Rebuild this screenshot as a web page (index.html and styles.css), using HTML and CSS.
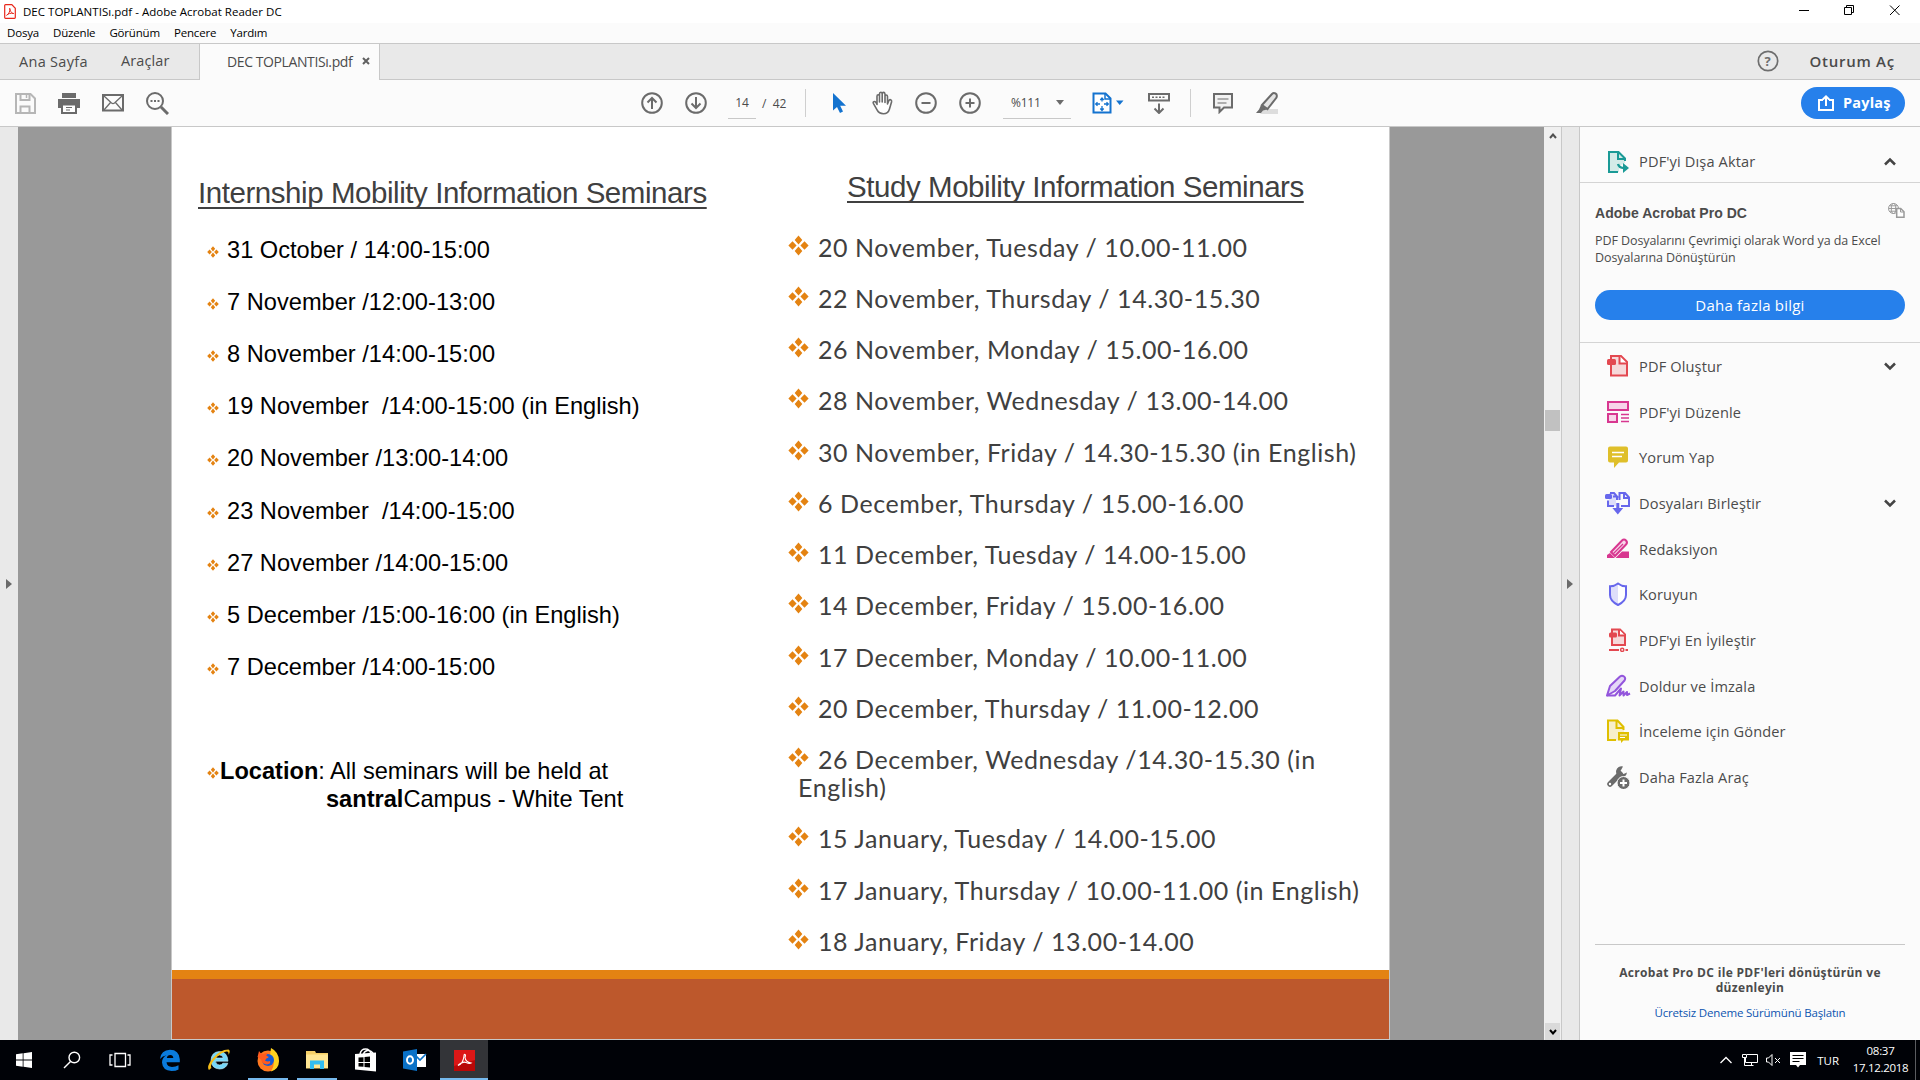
FILE: index.html
```html
<!DOCTYPE html>
<html lang="tr">
<head>
<meta charset="utf-8">
<title>DEC TOPLANTISı.pdf - Adobe Acrobat Reader DC</title>
<link rel="stylesheet" href="styles.css">
</head>
<body>
<svg class="defs" width="0" height="0">
  <symbol id="diamonds" viewBox="0 0 22 22"><path d="M11 .5l4 4.7-4 4.7-4-4.7zM11 12.100l4 4.700-4 4.700-4-4.700zM4.700 6.500l4.300 4.500-4.300 4.500L.4 11zM17.300 6.500l4.300 4.500-4.300 4.500L13 11z" fill="currentColor"/></symbol>
  <symbol id="chev" viewBox="0 0 14 10"><path d="M2 2.500l5 5 5-5" fill="none" stroke="#444" stroke-width="2.500"/></symbol>
</svg>
<div class="window">
  <header class="titlebar">
    <svg class="app-icon" width="12" height="15" viewBox="0 0 12 15"><path d="M1.500.7h6.300l3.500 3.600v9.200a.8.800 0 0 1-.8.800h-9a.8.800 0 0 1-.8-.8v-12a.8.800 0 0 1 .8-.8z" fill="#fff" stroke="#e8271b" stroke-width="1.200"/><path d="M2.600 11.300C5 10 6.500 6.500 5.700 4.300c1 4 2 5 4 5.200C7 8.700 4 9.700 2.600 11.300z" fill="none" stroke="#e8271b"/></svg>
    <span class="title">DEC TOPLANTISı.pdf - Adobe Acrobat Reader DC</span>
    <svg class="win-controls" width="104" height="12" viewBox="0 0 104 12" fill="none" stroke="#000"><path d="M0 6.500h10M45.500 3.500h7v7h-7zM47.500 3v-1.500h7v7H53M91 1.500l9.500 9.500M100.500 1.500L91 11"/></svg>
  </header>
  <nav class="menubar"><span>Dosya</span><span>Düzenle</span><span>Görünüm</span><span>Pencere</span><span>Yardım</span></nav>
  <div class="tabbar">
    <span class="tab home">Ana Sayfa</span><span class="tab tools-tab">Araçlar</span>
    <div class="tab active"><span>DEC TOPLANTISı.pdf</span><svg width="8" height="8" viewBox="0 0 8 8"><path d="M1 1l6 6M7 1L1 7" stroke="#606060" stroke-width="2"/></svg></div>
    <div class="account">
      <svg width="22" height="22" viewBox="0 0 22 22"><circle cx="11" cy="11" r="9.700" fill="none" stroke="#6e6e6e" stroke-width="1.700"/><text x="11" y="16" text-anchor="middle" class="qmark">?</text></svg>
      <span>Oturum Aç</span>
    </div>
  </div>
  <div class="toolbar">
    <div class="group files">
      <svg width="24" height="24" viewBox="0 0 24 24" fill="none" stroke="#b6b6b6" stroke-width="2"><path d="M3 3h14.500L22 7.500V22H3z"/><path d="M7.500 3v6h9V3M7.500 22v-6.500h9V22"/><path d="M13.500 4v3" stroke-width="1.500"/></svg>
      <svg width="24" height="24" viewBox="0 0 24 24"><path d="M5 2h14v5H5zM1 8h22v9h-3v-3H4v3H1z" fill="#6b6b6b"/><path d="M5 13.500h14V22H5z" fill="#fff" stroke="#6b6b6b" stroke-width="2"/><path d="M9 16.500h6M9 19h4" stroke="#6b6b6b" stroke-width="1.200"/></svg>
      <svg width="24" height="24" viewBox="0 0 24 24" fill="none" stroke="#6b6b6b"><path d="M2 4h20v15.500H2z" stroke-width="2"/><path d="M3 5l7.500 7q1.500 1.200 3 0L21 5M3 19l6.500-7.500M21 19l-6.500-7.500" stroke-width="1.300"/></svg>
      <svg width="24" height="24" viewBox="0 0 24 24" fill="none" stroke="#6b6b6b"><circle cx="10" cy="10" r="8" stroke-width="2"/><path d="M16 16l7 7" stroke-width="3"/><path d="M5.500 10h9" stroke-width="2" stroke-dasharray="2 1.500"/></svg>
    </div>
    <div class="group pages">
      <svg width="22" height="22" viewBox="0 0 22 22" class="line"><circle cx="11" cy="11" r="9.800"/><path d="M11 17V6M6.500 10.500L11 6l4.500 4.500"/></svg>
      <svg width="22" height="22" viewBox="0 0 22 22" class="line"><circle cx="11" cy="11" r="9.800"/><path d="M11 5v11M6.500 11.500L11 16l4.500-4.500"/></svg>
      <span class="page-no">14</span><span class="page-total">/&nbsp; 42</span>
    </div>
    <i class="sep"></i>
    <div class="group view">
      <svg width="14" height="22" viewBox="0 0 14 22"><path d="M1 1v17.500l4-3.500 3 6 3-1.500-2.800-5.700H14z" fill="#1473cf"/></svg>
      <svg class="hand" width="24" height="24" viewBox="0 0 24 24" fill="#fff" stroke="#6b6b6b" stroke-width="1.600" stroke-linejoin="round" stroke-linecap="round"><path d="M7 13.500V5.200q0-1.500 1.200-1.500t1.300 1.500V11 3q0-1.700 1.300-1.700T12.200 3v8V3q0-1.600 1.300-1.600T15 3v8.500-6q0-1.500 1.200-1.500t1.300 1.500V13l1.300-3.300q.6-1.400 1.800-1t1 2l-2.200 7.500q-1.300 4.500-6 4.500-4.500 0-6.200-3.500l-3.700-6.500q-.8-1.500.3-2t2.200.8z"/></svg>
      <svg width="22" height="22" viewBox="0 0 22 22" class="line"><circle cx="11" cy="11" r="9.800"/><path d="M6.500 11h9"/></svg>
      <svg width="22" height="22" viewBox="0 0 22 22" class="line"><circle cx="11" cy="11" r="9.800"/><path d="M6.500 11h9M11 6.500v9"/></svg>
      <div class="zoom-box"><span>%111</span><svg width="8" height="5" viewBox="0 0 8 5"><path d="M0 0h8L4 5z" fill="#6b6b6b"/></svg></div>
      <svg width="32" height="22" viewBox="0 0 32 22"><path d="M1.500 1.500h12l5 5v14h-17z" fill="#fff" stroke="#1473cf" stroke-width="2"/><path d="M13 2v5h5" fill="none" stroke="#1473cf" stroke-width="1.500"/><path d="M10 6.500v3M10 14v4M4 12h4M12 12h4M8.300 8L10 6l1.700 2M8.300 16.500l1.700 2 1.700-2M5.500 10.300L3.700 12l1.800 1.700M14.500 10.300l1.800 1.700-1.800 1.700" fill="none" stroke="#1473cf" stroke-width="1.300"/><path d="M24 8.500h7.500L27.700 13z" fill="#1473cf"/></svg>
      <svg class="ruler" width="22" height="22" viewBox="0 0 22 22" fill="none" stroke="#6b6b6b"><path d="M1 2h20v6.500H1z" stroke-width="2"/><path d="M4 5.200h14" stroke-width="1.500" stroke-dasharray="2 1.500"/><path d="M11 11.500v9M6.500 16.500L11 21l4.500-4.500" stroke-width="2"/></svg>
    </div>
    <i class="sep"></i>
    <div class="group notes">
      <svg width="22" height="22" viewBox="0 0 22 22" fill="#f2f2f2" stroke="#6b6b6b"><path d="M2 2h18v13.500h-8L7.500 20v-4.500H2z" stroke-width="2"/><path d="M5.500 7h11M5.500 11h9" stroke-width="1.200"/></svg>
      <svg width="24" height="22" viewBox="0 0 24 22"><path d="M9 17h14v5H5z" fill="#ddd"/><path d="M7 13L17 2q1.500-1.500 3.500-.5t1 4L12.500 17z" fill="#e4e4e4" stroke="#6b6b6b" stroke-width="2"/><path d="M6 13l6 4.500-4 1-2 2.500H1l3-3.500z" fill="#6b6b6b"/></svg>
    </div>
    <div class="share"><svg width="16" height="16" viewBox="0 0 16 16" fill="none" stroke="#fff" stroke-width="2"><path d="M5 5H1v10h14V5h-4M8 11V2M4.800 4.500L8 1.400l3.200 3.100"/></svg><span>Paylaş</span></div>
  </div>
  <main class="workspace">
    <div class="strip left"><svg width="6" height="10"><path d="M0 0l6 5-6 5z" fill="#6a6a6a"/></svg></div>
    <div class="canvas">
      <article class="slide">
        <div class="columns">
          <section class="internship">
            <h1>Internship Mobility Information Seminars</h1>
            <ul>
              <li><svg><use href="#diamonds"/></svg>31 October / 14:00-15:00</li>
              <li><svg><use href="#diamonds"/></svg>7 November /12:00-13:00</li>
              <li><svg><use href="#diamonds"/></svg>8 November /14:00-15:00</li>
              <li><svg><use href="#diamonds"/></svg>19 November &nbsp;/14:00-15:00 (in English)</li>
              <li><svg><use href="#diamonds"/></svg>20 November /13:00-14:00</li>
              <li><svg><use href="#diamonds"/></svg>23 November &nbsp;/14:00-15:00</li>
              <li><svg><use href="#diamonds"/></svg>27 November /14:00-15:00</li>
              <li><svg><use href="#diamonds"/></svg>5 December /15:00-16:00 (in English)</li>
              <li><svg><use href="#diamonds"/></svg>7 December /14:00-15:00</li>
            </ul>
            <div class="location"><svg><use href="#diamonds"/></svg><p><b>Location</b>: All seminars will be held at<br><span class="campus"><b>santral</b>Campus - White Tent</span></p></div>
          </section>
          <section class="study">
            <h1>Study Mobility Information Seminars</h1>
            <ul>
              <li><svg><use href="#diamonds"/></svg>20 November, Tuesday / 10.00-11.00</li>
              <li><svg><use href="#diamonds"/></svg>22 November, Thursday / 14.30-15.30</li>
              <li><svg><use href="#diamonds"/></svg>26 November, Monday / 15.00-16.00</li>
              <li><svg><use href="#diamonds"/></svg>28 November, Wednesday / 13.00-14.00</li>
              <li><svg><use href="#diamonds"/></svg>30 November, Friday / 14.30-15.30 (in English)</li>
              <li><svg><use href="#diamonds"/></svg>6 December, Thursday / 15.00-16.00</li>
              <li><svg><use href="#diamonds"/></svg>11 December, Tuesday / 14.00-15.00</li>
              <li><svg><use href="#diamonds"/></svg>14 December, Friday / 15.00-16.00</li>
              <li><svg><use href="#diamonds"/></svg>17 December, Monday / 10.00-11.00</li>
              <li><svg><use href="#diamonds"/></svg>20 December, Thursday / 11.00-12.00</li>
              <li><svg><use href="#diamonds"/></svg>26 December, Wednesday /14.30-15.30 (in</li>
              <li class="wrapped">English)</li>
              <li><svg><use href="#diamonds"/></svg>15 January, Tuesday / 14.00-15.00</li>
              <li><svg><use href="#diamonds"/></svg>17 January, Thursday / 10.00-11.00 (in English)</li>
              <li><svg><use href="#diamonds"/></svg>18 January, Friday / 13.00-14.00</li>
            </ul>
          </section>
        </div>
        <div class="band"></div>
      </article>
    </div>
    <div class="scrollbar">
      <svg width="8" height="6" viewBox="0 0 8 6"><path d="M1 5l3-3.500L7 5" fill="none" stroke="#505050" stroke-width="2"/></svg>
      <div class="thumb"></div>
      <div class="down"><svg width="8" height="6" viewBox="0 0 8 6"><path d="M1 1l3 3.500L7 1" fill="none" stroke="#000" stroke-width="2"/></svg></div>
    </div>
    <div class="strip right"><svg width="6" height="10"><path d="M0 0l6 5-6 5z" fill="#6a6a6a"/></svg></div>
    <aside class="panel">
      <div class="tool export"><svg width="24" height="24" viewBox="0 0 24 24"><path d="M3 2h10l6 6v5l-6 3v6H3z" fill="#d3ebe8"/><path d="M12 22H3V2h9.500L19 8.500V11" fill="none" stroke="#1a9a96" stroke-width="2"/><path d="M12 2v7h7" fill="none" stroke="#1a9a96" stroke-width="2"/><path d="M12 14q1 4 6 4" fill="none" stroke="#1a9a96" stroke-width="2.300"/><path d="M17 13l6 5-6 5z" fill="#1a9a96"/></svg><span>PDF'yi Dışa Aktar</span><svg class="chev up"><use href="#chev"/></svg></div>
      <div class="promo">
        <div class="promo-head"><b>Adobe Acrobat Pro DC</b><svg width="17" height="15" viewBox="0 0 17 15" fill="none" stroke="#9a9a9a"><circle cx="5.500" cy="5.500" r="5"/><ellipse cx="5.500" cy="5.500" rx="2.200" ry="5"/><path d="M.5 5.500h10M1.500 2.800h8M1.500 8.200h8"/><path d="M8.700 5.500h4l3.300 3.300v5.500H8.700z" fill="#fff" stroke-width="1.500"/><path d="M12.500 6v3H16"/></svg></div>
        <p>PDF Dosyalarını Çevrimiçi olarak Word ya da Excel<br>Dosyalarına Dönüştürün</p>
        <div class="more">Daha fazla bilgi</div>
      </div>
      <div class="tools">
        <div class="tool"><svg width="24" height="24" viewBox="0 0 24 24"><path d="M5 2h10l6 6v13.500H5z" fill="#f6d9da" stroke="#e34850" stroke-width="2"/><path d="M13.500 2v7.500H21" fill="#fff" stroke="#e34850" stroke-width="2"/><rect x="1" y="5" width="9" height="6" rx="1.500" fill="#e34850"/></svg><span>PDF Oluştur</span><svg class="chev"><use href="#chev"/></svg></div>
        <div class="tool"><svg width="24" height="24" viewBox="0 0 24 24" fill="#f7d5e9" stroke="#d83790" stroke-width="2"><path d="M2 2h20v8H2zM2 14h9v8H2z"/><path d="M15 14.500h8M15 18h8M15 21.500h8" stroke-width="1.300"/></svg><span>PDF'yi Düzenle</span></div>
        <div class="tool"><svg width="24" height="24" viewBox="0 0 24 24"><path d="M4 1.500h16a2 2 0 0 1 2 2v12a2 2 0 0 1-2 2h-7L8 23v-5.500H4a2 2 0 0 1-2-2v-12a2 2 0 0 1 2-2z" fill="#dfbf2a"/><path d="M6 7.500h12M6 11.500h10" stroke="#fff" stroke-width="1.500"/></svg><span>Yorum Yap</span></div>
        <div class="tool"><svg width="26" height="24" viewBox="0 0 26 24"><path d="M4 2h7v13H4z" fill="#dedefa"/><path d="M5 2h4l3 3.500h-4M12 5v4M3 9.500V15h6M16 15h8V6.500L20 2h-5.500v7M19 2.500V7h4.500" fill="none" stroke="#6767ec" stroke-width="2"/><rect x="0" y="3" width="7" height="5" rx="1.500" fill="#6767ec"/><path d="M11.300 12h3v5h3.900L12.800 23.500 7.400 17h3.900z" fill="#6767ec"/></svg><span>Dosyaları Birleştir</span><svg class="chev"><use href="#chev"/></svg></div>
        <div class="tool"><svg width="24" height="24" viewBox="0 0 24 24"><path d="M10 20.500l6-6h7v6.500H10zM1 21v-3l3-2 5 5z" fill="#d83790"/><path d="M5 15L16 3.500q2-2 4 0t0 4L9 19z" fill="#f7d5e9" stroke="#d83790" stroke-width="2"/><path d="M7.500 16.500L17 7" stroke="#d83790" stroke-width="1.200"/></svg><span>Redaksiyon</span></div>
        <div class="tool"><svg width="24" height="24" viewBox="0 0 24 24"><path d="M12 1.500q4 3 8 2.800V13q0 6-8 10-8-4-8-10V4.300q4 .2 8-2.800z" fill="#fff"/><path d="M12 1.500V23q-8-4-8-10V4.300q4 .2 8-2.800z" fill="#dedefa"/><path d="M12 1.500q4 3 8 2.800V13q0 6-8 10-8-4-8-10V4.300q4 .2 8-2.800z" fill="none" stroke="#6767ec" stroke-width="2"/></svg><span>Koruyun</span></div>
        <div class="tool"><svg width="24" height="24" viewBox="0 0 24 24"><path d="M6 1.500h8l5 5V17H6z" fill="#f6d9da" stroke="#e34850" stroke-width="2"/><path d="M13 1.500v6h6" fill="#fff" stroke="#e34850" stroke-width="2"/><rect x="3" y="4.500" width="8" height="5" rx="1.500" fill="#e34850"/><path d="M3 22h10M19.500 22h2.500" stroke="#e34850" stroke-width="2"/><circle cx="16.200" cy="21.800" r="1.600" fill="#fff" stroke="#e34850" stroke-width="1.500"/></svg><span>PDF'yi En İyileştir</span></div>
        <div class="tool"><svg width="26" height="24" viewBox="0 0 26 24" stroke="#9355dc" stroke-width="2" stroke-linejoin="round"><path d="M2 21.500l3-9.500L15 2.500q2-1.500 4 0t.5 4L10 17z" fill="#e5d8f7"/><path d="M2 21.500h8l6-7-1.500 7 4-4v4l3.500-3.500v3l3-1.500" fill="none"/></svg><span>Doldur ve İmzala</span></div>
        <div class="tool"><svg width="24" height="24" viewBox="0 0 24 24"><path d="M2 1.500h10L18 8v5h-6v8.500H2z" fill="#f7efcb"/><path d="M10 21H2V1.500h9.500L17.500 8v3M10.500 2v7H17" fill="none" stroke="#dfbf00" stroke-width="2"/><path d="M12 13h11v8.500h-5.500L15 24v-2.500h-3z" fill="#dfbf00"/><path d="M14 16h7M14 18.500h5" stroke="#fff" stroke-width="1.200"/></svg><span>İnceleme için Gönder</span></div>
        <div class="tool"><svg width="24" height="24" viewBox="0 0 24 24"><path d="M4 19L14 9" stroke="#6b6b6b" stroke-width="5.500" stroke-linecap="round"/><path d="M17 1.500a5.500 5.500 0 1 0 4 6L17.500 9 14.500 6z" fill="#6b6b6b"/><circle cx="4" cy="19" r="1.200" fill="#fff"/><circle cx="17.500" cy="18" r="6.500" fill="#6b6b6b" stroke="#fbfbfb"/><path d="M17.500 14.500v7M14 18h7" stroke="#fff" stroke-width="2"/></svg><span>Daha Fazla Araç</span></div>
      </div>
      <footer class="trial"><b>Acrobat Pro DC ile PDF'leri dönüştürün ve<br>düzenleyin</b><span>Ücretsiz Deneme Sürümünü Başlatın</span></footer>
    </aside>
  </main>
  <div class="taskbar">
    <div class="task"><svg width="16" height="16" viewBox="0 0 16 16"><path d="M0 2.200l6.700-.9v6.200H0zM7.500 1.200L16 0v7.500H7.500zM0 8.400h6.700v6.300L0 13.800zM7.500 8.400H16V16l-8.500-1.200z" fill="#fff"/></svg></div>
    <div class="task"><svg width="18" height="18" viewBox="0 0 18 18" fill="none" stroke="#fff" stroke-width="1.400"><circle cx="11.300" cy="6.500" r="5.300"/><path d="M7.500 10.500L1 17"/></svg></div>
    <div class="task"><svg width="22" height="16" viewBox="0 0 22 16" fill="none" stroke="#fff" stroke-width="1.300"><path d="M6 1.500h10.500v13H6zM3.500 3H1v10h2.500M18.500 3H21v10h-2.500"/></svg></div>
    <div class="task pinned first"><svg width="22" height="22" viewBox="0 0 22 22"><path d="M1 10Q2 1 11 .8q9 0 9.800 9.500v3H7.500q.5 4.500 5.500 4.700 3.800 0 6.500-1.800v4.200Q17 22 12.500 22 3.500 21.500 3 13.500q0-5 4.500-7.300-4 .5-6.500 3.800zM7.800 9h6.500q-.2-3-3-3-3 .2-3.500 3z" fill="#0a7bdc"/></svg></div>
    <div class="task pinned"><svg width="24" height="24" viewBox="0 0 24 24"><path d="M12.300 3.500q8 0 8.700 9.700H8.500q.3 3.800 4 3.800 2.700 0 3.300-1.800h5Q19 21 12.500 21 4.500 20.500 4 12.500q.3-8.500 8.300-9zM8.700 10h7.500q-.4-3-3.700-3T8.700 10z" fill="#75d7f8" stroke="#c9f1fc" stroke-width=".6"/><path d="M2 22Q-1 18.500 6 10T21.500 1.500Q24 2.500 21.500 7q.5-4-2-3.500-5 .5-11 7T4.500 20Q3.500 20.500 2 22z" fill="#f5bd16"/></svg></div>
    <div class="task pinned running"><svg width="24" height="24" viewBox="0 0 24 24"><circle cx="12" cy="13" r="10.500" fill="#ff7820"/><path d="M15 0q8 4 8 13 0 8-8 10.500Q21 14 14 7z" fill="#ffd21f"/><circle cx="12" cy="12" r="6" fill="#155bd5"/><path d="M1.500 9L3 3q1 2.500 4 3 3-1.500 5-1-2 1.500-1.500 3 2.500.3 2 1.500Q10 10 9 12.500q2.500 1.500 5 .5 1 3-3 3.500-5-.5-6-5z" fill="#ff5b1f"/></svg></div>
    <div class="task pinned running"><svg width="22" height="20" viewBox="0 0 22 20"><path d="M0 3V1h9l1 2h12v15.500H0z" fill="#f5cf67"/><path d="M0 4.500h22v13.500H0z" fill="#ffe693"/><path d="M4 10.500h14V19h-4v-4.500H8V19H4z" fill="#33bdf0"/></svg></div>
    <div class="task pinned"><svg width="22" height="24" viewBox="0 0 22 24"><path d="M0 6l21-1.500v19L0 21.500z" fill="#fff"/><path d="M5 6q1-5 5.500-5T16 6M8.500 6q1-3 4-3.500T18 5" fill="none" stroke="#fff" stroke-width="1.500"/><path d="M3.500 9.500l5-.3V14h-5zM9.500 9l5.500-.4V14H9.500zM3.500 15h5v3.800l-5-.4zM9.500 15H15v4.500L9.500 19z" fill="#000"/></svg></div>
    <div class="task pinned"><svg width="24" height="22" viewBox="0 0 24 22"><path d="M12 5h11v13H12z" fill="#fff"/><path d="M12 6l5 5 6-6" fill="none" stroke="#0a72c8" stroke-width="1.700"/><path d="M0 2.500L14 0v22L0 19.500z" fill="#0a72c8"/><ellipse cx="7" cy="11" rx="3" ry="3.800" fill="none" stroke="#fff" stroke-width="2"/></svg></div>
    <div class="task pinned running current"><svg width="21" height="21" viewBox="0 0 21 21"><path d="M0 0h21v21H0z" fill="#b80808"/><path d="M0 0h21v10L0 16z" fill="#dc1717"/><path d="M4 15.500q5-1.500 6-9.500 0-2 1-1.500t0 3q.5 4.500 6 5.500-1.500 1-5-.5T4 15.500z" fill="none" stroke="#fff" stroke-width="1.100"/></svg></div>
    <div class="tray">
      <svg width="12" height="8" viewBox="0 0 12 8"><path d="M.5 7L6 1.500 11.500 7" fill="none" stroke="#fff" stroke-width="1.300"/></svg>
      <svg width="16" height="14" viewBox="0 0 16 14" fill="none" stroke="#fff"><path d="M5 1.500h10.500v8H3.500V5M.5 1.500h4v3h-4zM2.500 5v7.500h9M9.500 10v3"/></svg>
      <svg width="15" height="12" viewBox="0 0 15 12" fill="none" stroke="#fff"><path d="M.5 4v4h2L6 11.500V.5L2.500 4zM9 4l5 5M14 4L9 9"/></svg>
      <svg width="16" height="16" viewBox="0 0 16 16"><path d="M0 0h16v13h-6l-2 2.500L6 13H0z" fill="#fff"/><path d="M2.500 3.500h11M2.500 6.500h11M2.500 9.500h7" stroke="#000" stroke-width="1.200"/></svg>
      <span class="lang">TUR</span>
      <div class="clock"><span>08:37</span><span>17.12.2018</span></div>
    </div>
  </div>
</div>
</body>
</html>
```
FILE: styles.css
```css
* { box-sizing: border-box; }
body { margin: 0; font-family: "Open Sans", "Noto Sans", sans-serif; color: #4b4b4b; overflow: hidden; }
.defs { position: absolute; }
svg { display: block; flex: none; }
.window { width: 1920px; height: 1080px; display: flex; flex-direction: column; }

.titlebar { height: 23px; background: #fff; display: flex; align-items: center; padding: 0 17px 0 4px; color: #000; font-size: 11.5px; letter-spacing: .02px; flex: none; }
.title { margin-left: 7px; }
.win-controls { margin-left: auto; margin-top: -4px; }
.menubar { height: 20px; background: #fbfbfb; display: flex; align-items: center; padding: 0 0 2px 7px; gap: 14px; color: #000; font-size: 11.5px; letter-spacing: -.18px; flex: none; }

.tabbar { height: 37px; background: #e9e9e9; border-top: 1px solid #c8c8c8; border-bottom: 1px solid #c8c8c8; display: flex; align-items: center; flex: none; font-size: 14.500px; }
.tab.home { width: 102px; margin-left: 19px; letter-spacing: .3px; }
.tab.tools-tab { width: 78px; letter-spacing: .1px; margin-top: -2px; }
.tab.active { width: 181px; height: 36px; margin-bottom: -1px; border: solid #c8c8c8; border-width: 0 1px; background: #fbfbfb; display: flex; align-items: center; justify-content: space-between; padding: 0 9px 2px 27px; letter-spacing: -.4px; font-size: 14px; }
.account { margin-left: auto; margin-right: 25px; display: flex; align-items: center; gap: 30px; font-weight: 600; font-size: 15px; letter-spacing: .75px; padding-bottom: 1px; }
.qmark { font: bold 13px "Open Sans", sans-serif; fill: #6e6e6e; }

.toolbar { height: 47px; background: #fbfbfb; border-bottom: 1px solid #c8c8c8; display: flex; align-items: center; padding: 0 15px 0 13px; flex: none; }
.group { display: flex; align-items: center; font-size: 12px; }
.files { gap: 20px; width: 628px; }
.pages { gap: 22px; width: 164px; }
.page-no { width: 28px; height: 32px; line-height: 31px; text-align: center; border-bottom: 1px solid #c8c8c8; margin-left: -1px; }
.page-total { margin-left: -16px; white-space: nowrap; }
.sep { width: 1px; height: 28px; background: #cfcfcf; }
.line { fill: none; stroke: #6b6b6b; stroke-width: 2; }
.view { margin-left: 26px; width: 358px; }
.hand { margin: 0 21px 0 24px; }
.view .line + .line { margin-left: 22px; }
.zoom-box { width: 68px; height: 32px; margin: 0 21px 0 22px; padding: 0 7px 0 8px; display: flex; align-items: center; justify-content: space-between; border-bottom: 1px solid #c8c8c8; letter-spacing: -.25px; }
.ruler { margin-left: 24px; }
.notes { margin-left: 21px; gap: 21px; }
.share { margin-left: auto; width: 104px; height: 32px; border-radius: 16px; background: #2680eb; color: #fff; font-weight: 700; font-size: 14.500px; letter-spacing: .2px; display: flex; align-items: center; gap: 9px; padding: 0 0 1px 17px; }

.workspace { height: 913px; display: flex; flex: none; }
.strip { width: 18px; background: #e9e9e9; display: flex; align-items: center; justify-content: center; }
.strip.right { width: 19px; border: solid #c8c8c8; border-width: 0 1px; padding-right: 1px; }
.canvas { width: 1526px; background: #999; padding-left: 153px; }
.slide { width: 1219px; height: 913px; background: #fff; border: solid #c8c8c8; border-width: 0 1px 1px; display: flex; flex-direction: column; }
.columns { flex: 1; display: flex; }
.band { height: 69px; background: #bd582c; border-top: 9px solid #e48312; }
h1 { margin: 0; font: 400 29.500px/34px "Liberation Sans", Arial, sans-serif; letter-spacing: -.44px; color: #404040; text-decoration: underline; text-decoration-thickness: 2px; text-underline-offset: 4px; text-decoration-skip-ink: none; white-space: nowrap; }
ul { list-style: none; margin: 0; padding: 0; }
li { display: flex; align-items: center; white-space: nowrap; }
.columns svg { color: #e48312; }
.internship { width: 616px; padding: 49px 0 0 26px; font: 23.600px/28px "Liberation Sans", Arial, sans-serif; color: #000; }
.internship ul { margin: 14px 0 0 9px; }
.internship li { height: 52.100px; letter-spacing: .02px; }
.internship svg { width: 12px; height: 12px; margin: 4px 8px 0 0; }
.location { display: flex; margin: 64px 0 0 9px; }
.location svg { margin: 10px 1px 0 0; }
.location p { margin: 0; white-space: nowrap; }
.campus { margin-left: 106px; }
.study { padding: 43px 0 0; font: 25px/28px Lato, Carlito, sans-serif; letter-spacing: .56px; color: #404040; }
.study h1 { margin-left: 59px; }
.study ul { margin-top: 17px; }
.study li { height: 51.250px; }
.study li.wrapped { height: 28px; margin: -12px 0 0 10px; }
.study li.wrapped + li { margin-top: 12px; }
.study svg { width: 21px; height: 21px; margin: -3px 9px 0 0; }

.scrollbar { width: 17px; background: #f0f0f0; display: flex; flex-direction: column; align-items: center; padding: 6px 1px 0; }
.thumb { width: 15px; height: 21px; background: #c1c1c1; margin-top: 271px; }
.down { width: 15px; height: 17px; background: #dadada; margin-top: auto; display: flex; align-items: center; justify-content: center; }

.panel { width: 340px; background: #fbfbfb; display: flex; flex-direction: column; padding: 0 15px; }
.tool { display: flex; align-items: center; height: 45.700px; padding-left: 10px; font-size: 14.600px; letter-spacing: .13px; }
.tool > svg:first-child { width: 26px; height: 24px; }
.tool span { margin-left: 8px; }
.tool .chev { width: 14px; height: 10px; margin-left: auto; margin-right: 8px; }
.tool .up { transform: rotate(180deg); }
.export { height: 56px; margin: 0 -15px; padding: 23px 15px 0 25px; border-bottom: 1px solid #d4d4d4; align-items: flex-start; }
.export span { line-height: 24px; margin-top: -1px; }
.export .chev { margin-top: 7px; }
.promo { height: 160px; margin: 0 -15px; padding: 19px 15px 0; border-bottom: 1px solid #d4d4d4; }
.promo-head { display: flex; justify-content: space-between; align-items: flex-start; height: 22px; font: 14px/22px "Liberation Sans", Arial, sans-serif; letter-spacing: .04px; }
.promo-head svg { margin-top: 1px; }
.promo p { margin: 8px 0 24px; font-size: 12.500px; line-height: 17px; letter-spacing: -.08px; white-space: nowrap; }
.more { height: 30px; border-radius: 15px; background: #2680eb; color: #fff; font-size: 15px; letter-spacing: .22px; line-height: 30px; text-align: center; }
.trial { margin-top: auto; height: 96px; border-top: 1px solid #c8c8c8; padding-top: 20px; display: flex; flex-direction: column; align-items: center; text-align: center; font-size: 12px; letter-spacing: .32px; line-height: 15px; white-space: nowrap; }
.trial span { margin-top: 10px; color: #0d55b0; font-size: 11.500px; letter-spacing: -.18px; }

.taskbar { height: 40px; background: #000207; display: flex; color: #fff; flex: none; }
.task { width: 48px; height: 40px; display: flex; align-items: center; justify-content: center; }
.pinned { width: 49px; }
.first { margin-left: 1px; }
.task.running { background: linear-gradient(#76b9ed, #76b9ed) center bottom / 40px 2px no-repeat; }
.task.current { width: 48px; background: linear-gradient(#76b9ed, #76b9ed) center bottom / 48px 2px no-repeat #333438; margin-left: 1px; }
.tray { margin-left: auto; margin-right: 4px; padding-right: 7px; border-right: 1px solid #5a5c60; display: flex; align-items: center; font-size: 11.500px; }
.tray svg:nth-child(2) { margin-left: 10px; }
.tray svg:nth-child(3) { margin-left: 8px; }
.tray svg:nth-child(4) { margin-left: 9px; }
.lang { margin-left: 11px; }
.clock { margin: -2px 0 0 14px; width: 55px; display: flex; flex-direction: column; align-items: center; line-height: 17px; letter-spacing: -.3px; }
```
